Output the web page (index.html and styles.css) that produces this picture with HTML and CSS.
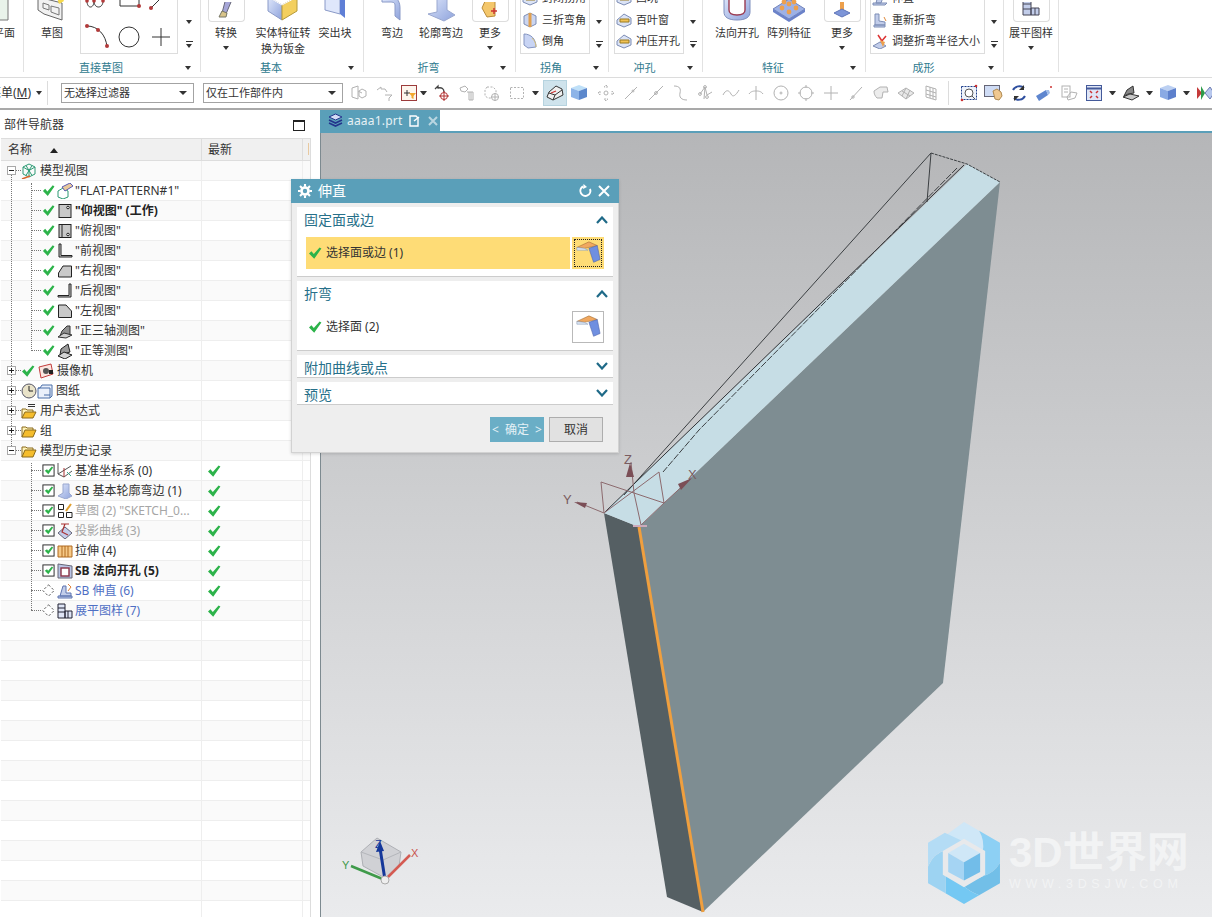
FILE: index.html
```html
<!DOCTYPE html>
<html lang="zh">
<head>
<meta charset="utf-8">
<title>伸直</title>
<link rel="stylesheet" href="styles.css">
</head>
<body>
<svg class="defs" width="0" height="0">
<defs>
<linearGradient id="gb" x1="0" y1="0" x2="1" y2="1"><stop offset="0" stop-color="#dfe7fb"/><stop offset="1" stop-color="#8ea3dc"/></linearGradient>
<symbol id="check" viewBox="0 0 14 14"><path d="M1 7.500 3.400 5.200 5.800 8 11.600 1.400 13.400 2.600 6.200 12.800Z" fill="#2cb34a"/></symbol>
<symbol id="folder" viewBox="0 0 16 16"><path d="M1 14V4h4l1 1h6v2" fill="#fff3b8" stroke="#8a6a1c"/><path d="M1 14 4 7h11l-3 7Z" fill="#f5bd2c" stroke="#8a6a1c"/></symbol>
<symbol id="folderdoc" viewBox="0 0 16 16"><path d="M7 1.500h7M7 3.500h7" stroke="#333"/><path d="M1 15V6h4l1 1h6v2" fill="#fff3b8" stroke="#8a6a1c"/><path d="M1 15 4 9h11l-3 6Z" fill="#f5bd2c" stroke="#8a6a1c"/></symbol>
<symbol id="tri" viewBox="0 0 16 16"><path d="M3 13 5 8 10 3 13 3 13 9 13 13Z" fill="#8f8f8f" stroke="#333"/><path d="M1 14 7 10 15 12 9 15Z" fill="#cfcfcf" stroke="#333"/></symbol>
<symbol id="diamond" viewBox="0 0 16 16"><path d="M8 1 15 8 8 15 1 8Z" fill="#fff" stroke="#333" stroke-dasharray="3 2.400"/></symbol>
<symbol id="box" viewBox="0 0 14 14"><rect x="1" y="1" width="12" height="12" fill="#fff" stroke="#222"/><path d="M3 7.300 5.400 5.600 6.600 7.400 10.600 2.600 12 3.800 6.800 11Z" fill="#2cb34a"/></symbol>
<symbol id="bendsel" viewBox="0 0 28 28"><path d="M2 8 15 2 24 6 10 9Z" fill="#f0a860" stroke="#a06a30" stroke-width=".6"/><path d="M2 8 10 9 14 11 2 11Z" fill="#dbe6f5" stroke="#8a9ab5" stroke-width=".6"/><path d="M15 9 24 6 27 21 20 24Z" fill="#6f8fe0" stroke="#4a60a8" stroke-width=".6"/></symbol>
<symbol id="gal1" viewBox="0 0 18 16"><path d="M2 8 9 2 16 6 16 12 9 15 2 12Z" fill="#dbe3f5" stroke="#7d8db5"/><path d="M5 7h9v3H5Z" fill="#f2c356" stroke="#9a7a20"/></symbol>
</defs>
</svg>

<div class="app">
  <header class="ribbon">
    <section class="grp g1">
      <div class="body"><div class="big shifted"><svg class="bi" width="22" height="22" viewBox="0 0 22 22"><path d="M0-4H15V20H0Z" fill="#e9f3ea" stroke="#777"/></svg><span class="t">平面</span></div></div>
      <div class="foot"></div>
    </section>
    <section class="grp g2">
      <div class="body">
        <div class="big w48"><svg class="bi" width="30" height="22" viewBox="0 0 30 22"><path d="M1-3 25 3 25 20 7 14 1 10Z" fill="#f1f1f1" stroke="#666"/><path d="M6 3 12 5 12 10 6 8ZM14 6 22 8 22 15 14 12Z" fill="none" stroke="#777"/><path d="M24-5 27 1 22 4 20-2Z" fill="#f6d94b"/></svg><span class="t">草图</span></div>
        <div class="gallery sk">
          <svg width="32" height="32" viewBox="0 0 32 32"><path d="M6 5V12C6 20 13 20 13 12V5M13 12C13 20 22 20 22 12V5" fill="none" stroke="#333"/><circle cx="6" cy="12" r="1.800" fill="#b23a3a"/><circle cx="13" cy="12" r="1.800" fill="#b23a3a"/><circle cx="22" cy="12" r="1.800" fill="#b23a3a"/></svg>
          <svg width="32" height="32" viewBox="0 0 32 32"><path d="M7 0V17H26V0" fill="none" stroke="#333"/><circle cx="26" cy="17" r="2" fill="#b23a3a"/></svg>
          <svg width="32" height="32" viewBox="0 0 32 32"><path d="M6 19 24 1" fill="none" stroke="#333"/><circle cx="6" cy="19" r="2" fill="#b23a3a"/></svg>
          <svg width="32" height="32" viewBox="0 0 32 32"><path d="M6 5C17 5 25 14 26 26" fill="none" stroke="#333"/><circle cx="6" cy="5" r="2" fill="#b23a3a"/><circle cx="17" cy="9" r="2" fill="#b23a3a"/><circle cx="26" cy="25" r="2" fill="#b23a3a"/></svg>
          <svg width="32" height="32" viewBox="0 0 32 32"><circle cx="16" cy="16" r="10" fill="none" stroke="#333"/></svg>
          <svg width="32" height="32" viewBox="0 0 32 32"><path d="M16 7V25M7 16H25" stroke="#333"/></svg>
        </div>
        <div class="side"><i class="caret"></i><i class="caret2"></i></div>
      </div>
      <div class="foot"><span class="lab">直接草图</span><i class="caret"></i></div>
    </section>
    <section class="grp g3">
      <div class="body">
        <div class="big w50"><span class="more-box"><svg width="18" height="16" viewBox="0 0 18 16"><path d="M9-4 14 0 9 12 5 11Z" fill="#a6a6d8" stroke="#667"/><path d="M2 15 5 9 10 11 9 15Z" fill="#d8c48a" stroke="#776"/></svg></span><span class="t">转换</span><i class="caret"></i></div>
        <div class="big w64"><svg class="bi" width="32" height="22" viewBox="0 0 32 22"><path d="M1-3 1 11 15 20 15 5Z" fill="url(#gb)" stroke="#8a9ac8"/><path d="M15 5 30-3 30 11 15 20Z" fill="#f3cf5e" stroke="#b59a3a"/><path d="M1-3 15 5 30-3" fill="none" stroke="#fff"/></svg><span class="t two">实体特征转<br>换为钣金</span></div>
        <div class="big w40"><svg class="bi" width="26" height="22" viewBox="0 0 26 22"><path d="M3-3 18-3 18 14 3 10Z" fill="#dfe7fb" stroke="#8a9ac8"/><path d="M18-3 23-3 23 18 18 14Z" fill="#5f7fd6"/></svg><span class="t">突出块</span></div>
      </div>
      <div class="foot"><span class="lab">基本</span><i class="caret"></i></div>
    </section>
    <section class="grp g4">
      <div class="body">
        <div class="big w50"><svg class="bi" width="24" height="22" viewBox="0 0 24 22"><path d="M2-3H12C18-3 20 3 20 8V20L15 16V5C15 2 12 2 9 2L2 2Z" fill="url(#gb)" stroke="#8a9ac8"/></svg><span class="t">弯边</span></div>
        <div class="big w48"><svg class="bi" width="30" height="22" viewBox="0 0 30 22"><path d="M11-4H21V10L29 15 18 21 2 14 11 12Z" fill="url(#gb)" stroke="#9aa8d0"/></svg><span class="t">轮廓弯边</span></div>
        <div class="big w50"><span class="more-box"><svg width="18" height="16" viewBox="0 0 18 16"><path d="M1 6 5-3 14-3 14 14 6 15Z" fill="#f4c76b" stroke="#b98b3a"/><path d="M10 9h6M13 6v6" stroke="#c33" stroke-width="1.400"/></svg></span><span class="t">更多</span><i class="caret"></i></div>
      </div>
      <div class="foot"><span class="lab">折弯</span><i class="caret"></i></div>
    </section>
    <section class="grp g5">
      <div class="body">
        <div class="gallery list wl">
          <div class="gi"><svg width="18" height="16"><use href="#gal1"/></svg>封闭拐角</div>
          <div class="gi"><svg width="18" height="16" viewBox="0 0 16 16"><path d="M2 4 8 1 14 4 14 12 8 15 2 12Z" fill="#cbd5f0" stroke="#7d8db5"/><path d="M8 1V15" stroke="#e0a050" stroke-width="3"/></svg>三折弯角</div>
          <div class="gi"><svg width="18" height="16" viewBox="0 0 16 16"><path d="M2 1C9 1 14 6 14 14L6 15 2 12Z" fill="#c8d4f4" stroke="#8494c0"/><path d="M10 5C13 8 14 11 14 14" stroke="#d8c07a" fill="none"/></svg>倒角</div>
        </div>
        <div class="side s18"><i class="caret"></i><i class="caret2"></i></div>
      </div>
      <div class="foot"><span class="lab">拐角</span><i class="caret"></i></div>
    </section>
    <section class="grp g6">
      <div class="body">
        <div class="gallery list wl">
          <div class="gi"><svg width="18" height="16"><use href="#gal1"/></svg>凹坑</div>
          <div class="gi"><svg width="18" height="16"><use href="#gal1"/></svg>百叶窗</div>
          <div class="gi"><svg width="18" height="16"><use href="#gal1"/></svg>冲压开孔</div>
        </div>
        <div class="side s18"><i class="caret"></i><i class="caret2"></i></div>
      </div>
      <div class="foot"><span class="lab">冲孔</span><i class="caret"></i></div>
    </section>
    <section class="grp g7">
      <div class="body">
        <div class="big w52 ml8"><svg class="bi" width="30" height="22" viewBox="0 0 30 22"><path d="M2-4V12C2 17 6 20 15 20S28 17 28 12V-4Z" fill="url(#gb)" stroke="#7f8fbe"/><path d="M7-4V10C7 13 10 15 15 15S23 13 23 10V-4Z" fill="#fff" stroke="#9a3b52" stroke-width="1.400"/></svg><span class="t">法向开孔</span></div>
        <div class="big w52"><svg class="bi" width="34" height="22" viewBox="0 0 34 22"><path d="M1 9 17-1 33 9 17 19Z" fill="#9db1e6" stroke="#7284bb"/><path d="M1 9V12L17 22 33 12V9L17 19Z" fill="#6b82c9"/><g fill="#eda04c"><circle cx="10" cy="8" r="2.400"/><circle cx="17" cy="4" r="2.400"/><circle cx="24" cy="8" r="2.400"/><circle cx="17" cy="12" r="2.400"/><circle cx="12" cy="2" r="2.400"/><circle cx="22" cy="2" r="2.400"/></g></svg><span class="t">阵列特征</span></div>
        <div class="big w46 ml4"><span class="more-box"><svg width="18" height="16" viewBox="0 0 18 16"><path d="M7-3h4V8H7Z" fill="#eda04c"/><path d="M1 11 9 7 17 11 9 15Z" fill="#7d95d8" stroke="#5f75b8"/></svg></span><span class="t">更多</span><i class="caret"></i></div>
      </div>
      <div class="foot"><span class="lab">特征</span><i class="caret"></i></div>
    </section>
    <section class="grp g8">
      <div class="body">
        <div class="gallery list wx">
          <div class="gi"><svg width="18" height="16" viewBox="0 0 16 16"><path d="M1 13H15L13 15H1ZM7 2h6L9 13H4Z" fill="#c2cdea" stroke="#7d8db5"/></svg>伸直</div>
          <div class="gi"><svg width="18" height="16" viewBox="0 0 16 16"><path d="M2 13H13V15H2ZM3 13V2H7V9L13 10V13Z" fill="#c2cdea" stroke="#7d8db5"/><path d="M12 5 14 9" stroke="#e08a3a"/></svg>重新折弯</div>
          <div class="gi"><svg width="18" height="16" viewBox="0 0 16 16"><path d="M1 13 8 9 14 13 8 16Z" fill="#c2cdea" stroke="#7d8db5"/><path d="M6 2 10 8M9 9 14 3" stroke="#d33" stroke-width="1.500"/><path d="M8 7 13 9 11 14Z" fill="#eda04c"/></svg>调整折弯半径大小</div>
        </div>
        <div class="side s18"><i class="caret"></i><i class="caret2"></i></div>
      </div>
      <div class="foot"><span class="lab">成形</span><i class="caret"></i></div>
    </section>
    <section class="grp g9">
      <div class="body">
        <div class="big w54"><span class="more-box"><svg width="18" height="16" viewBox="0 0 18 16"><path d="M1-3H9V13H1ZM9 6H17V13H9Z" fill="#c2cdea" stroke="#445"/><path d="M1 2H9M1 7H9M13 6V13" stroke="#445"/></svg></span><span class="t">展平图样</span><i class="caret"></i></div>
      </div>
      <div class="foot"></div>
    </section>
  </header>

  <nav class="toolbar">
    <span class="menu">菜单(<u>M</u>)</span><i class="caret menu-c"></i><span class="sep first"></span>
    <div class="select s1"><span>无选择过滤器</span><i class="caret"></i></div>
    <div class="select s2"><span>仅在工作部件内</span><i class="caret"></i></div>
    <span class="ti ti-first"><svg width="18" height="18" viewBox="0 0 18 18" class="dim"><path d="M2 4 8 2 8 15 2 13ZM8 7 12 9M12 5l4 2v5l-4 2-3-2V7Z"/></svg></span>
    <span class="ti"><svg width="18" height="18" viewBox="0 0 18 18" class="dim"><path d="M2 6 6 3V5H10L12 8M10 11H17L14 14V17"/></svg></span>
    <span class="ti"><svg width="16" height="16" viewBox="0 0 16 16"><rect x=".5" y=".5" width="15" height="15" fill="#fdf6ee" stroke="#9c3b3b"/><path d="M3 8H9M6 5V11" stroke="#333"/><path d="M8 8H15L12.500 11V14L10.500 13V11Z" fill="#f2a72e"/></svg></span>
    <i class="caret ar tight"></i>
    <span class="ti"><svg width="18" height="18" viewBox="0 0 18 18"><path d="M2 5 5 2V4C9 3 11 5 11 8" fill="none" stroke="#444" stroke-width="1.300"/><circle cx="11" cy="12" r="3.500" fill="none" stroke="#b23030"/><path d="M11 7V17M6 12H16" stroke="#b23030"/></svg></span>
    <span class="ti"><svg width="18" height="18" viewBox="0 0 18 18" class="dim"><path d="M2 4 7 2 10 5 7 8 3 7ZM9 8H15V16H11V8M13 8V16"/></svg></span>
    <span class="ti"><svg width="18" height="18" viewBox="0 0 18 18" class="dim"><path d="M4 3H10L13 6V10M4 3 2 6V12L5 14H8" stroke-dasharray="2 1.500"/><circle cx="12" cy="13" r="3.500"/><path d="M12 9V17M8 13H16"/></svg></span>
    <span class="ti"><svg width="18" height="18" viewBox="0 0 18 18" class="dim"><rect x="2.500" y="3.500" width="13" height="11" stroke-dasharray="2 1.500"/></svg></span>
    <i class="caret ar"></i>
    <span class="ti sel"><svg width="18" height="16" viewBox="0 0 18 16"><path d="M1 12 3 7 10 1 16 4 17 10 7 15Z" fill="#f0f0f0" stroke="#333"/><path d="M3 8 9 10 16 5M9 10 7 15" fill="none" stroke="#333"/><path d="M5 8 10 6" stroke="#c33" stroke-width="1.300"/></svg></span>
    <span class="ti"><svg width="18" height="17" viewBox="0 0 18 17"><path d="M1 4 9 1 17 4 9 7Z" fill="#bfe0f8"/><path d="M1 4 9 7V16L1 13Z" fill="#8db4e8"/><path d="M17 4 9 7V16L17 13Z" fill="#5d88cc"/></svg></span>
    <span class="ti nudge"><svg width="18" height="18" viewBox="0 0 18 18" class="dim"><circle cx="9" cy="9" r="2"/><path d="M9 1 11 3H7ZM9 17 7 15H11ZM1 9 3 7V11ZM17 9 15 11V7Z" stroke-dasharray="2 1"/></svg></span>
    <span class="ti"><svg width="18" height="18" viewBox="0 0 18 18" class="dim"><path d="M3 15 15 3"/><circle cx="11" cy="7" r="1"/></svg></span>
    <span class="ti"><svg width="18" height="18" viewBox="0 0 18 18" class="dim"><path d="M2 16 16 2"/><circle cx="9" cy="9" r="1.400"/></svg></span>
    <span class="ti"><svg width="18" height="18" viewBox="0 0 18 18" class="dim"><path d="M2 2C8 2 9 5 8 9S9 16 15 16"/></svg></span>
    <span class="ti"><svg width="18" height="18" viewBox="0 0 18 18" class="dim"><path d="M3 10 8 3 10 11 15 8M8 3 7 15"/><circle cx="8" cy="3" r="1.400"/><circle cx="3" cy="10" r="1.400"/><circle cx="10" cy="13" r="1.400"/></svg></span>
    <span class="ti"><svg width="18" height="18" viewBox="0 0 18 18" class="dim"><path d="M1 11C4 5 7 6 9 10S14 11 17 6"/></svg></span>
    <span class="ti"><svg width="18" height="18" viewBox="0 0 18 18" class="dim"><path d="M9 2V16M2 10C4 7 7 7 9 7S14 7 16 10"/></svg></span>
    <span class="ti"><svg width="18" height="18" viewBox="0 0 18 18" class="dim"><circle cx="9" cy="9" r="7"/><circle cx="9" cy="9" r="1"/></svg></span>
    <span class="ti"><svg width="18" height="18" viewBox="0 0 18 18" class="dim"><circle cx="9" cy="9" r="6"/><path d="M9 1V4M9 14V17M1 9H4M14 9H17"/></svg></span>
    <span class="ti"><svg width="18" height="18" viewBox="0 0 18 18" class="dim"><path d="M9 2V16M2 9H16"/></svg></span>
    <span class="ti"><svg width="18" height="18" viewBox="0 0 18 18" class="dim"><path d="M3 16 15 3"/><circle cx="6" cy="13" r="1.200"/></svg></span>
    <span class="ti"><svg width="18" height="18" viewBox="0 0 18 18" class="dim"><path d="M2 7 8 3 15 3 16 8 11 8 10 14 5 14C3 12 2 10 2 7Z" fill="#ececec"/></svg></span>
    <span class="ti"><svg width="18" height="18" viewBox="0 0 18 18" class="dim"><path d="M1 9 9 4 17 9 9 15Z" fill="#e8e8e8"/><path d="M5 7 13 12M9 4 5 12M13 6 9 15"/></svg></span>
    <span class="ti"><svg width="18" height="18" viewBox="0 0 18 18" class="dim"><path d="M4 2 14 5V16L4 13ZM4 6 14 9M4 10 14 13M8 3V14M11 4V15"/></svg></span>
    <span class="sep"></span>
    <span class="ti"><svg width="18" height="18" viewBox="0 0 18 18"><rect x="1.500" y="2.500" width="15" height="13" fill="#eef3fb" stroke="#1f3f8a" stroke-dasharray="2 1"/><circle cx="9" cy="9" r="4" fill="#fff" stroke="#555"/><path d="M12 12 15 15" stroke="#555"/><circle cx="16" cy="2" r="1.300" fill="#c33"/><circle cx="2" cy="16" r="1.300" fill="#c33"/></svg></span>
    <span class="ti"><svg width="20" height="18" viewBox="0 0 20 18"><rect x=".5" y="1.500" width="15" height="11" fill="#cfdcf5" stroke="#667"/><path d="M9 7 13 5 17 8 18 12 15 16 11 15Z" fill="#f0c890" stroke="#b08a50"/></svg></span>
    <span class="ti"><svg width="18" height="18" viewBox="0 0 18 18"><path d="M3 6C5 2 11 1 14 4M15 12C13 16 7 17 4 14" fill="none" stroke="#2f4f9f" stroke-width="2"/><path d="M14 1V6H9" fill="#333"/><path d="M4 17V12H9" fill="#333"/></svg></span>
    <span class="ti"><svg width="18" height="18" viewBox="0 0 18 18"><path d="M1 12 11 6 13 11 4 17Z" fill="#5e86cf"/><path d="M11 6 13 11 15 9 14 6Z" fill="#9fbce8"/><circle cx="16" cy="3" r="1" fill="#c33"/></svg></span>
    <span class="ti"><svg width="18" height="18" viewBox="0 0 18 18" class="dim"><rect x="2" y="2" width="8" height="11"/><path d="M4 5H8M4 8H8M7 13 11 8 17 9 15 14 8 16Z"/></svg></span>
    <span class="ti"><svg width="16" height="16" viewBox="0 0 16 16"><rect x=".5" y=".5" width="15" height="15" fill="#dfe6f6" stroke="#445a9a"/><path d="M1 3.500H15" stroke="#445a9a" stroke-width="2"/><path d="M4 6 6 8M12 6 10 8M4 13 6 11M12 13 10 11" stroke="#c33" stroke-width="1.500"/></svg></span>
    <i class="caret ar"></i>
    <span class="ti"><svg width="18" height="16" viewBox="0 0 18 16"><path d="M2 11 5 5 11 1 12 8 6 9Z" fill="#888" stroke="#333"/><path d="M1 12 8 9 17 11 10 15Z" fill="#c8c8c8" stroke="#333"/></svg></span>
    <i class="caret ar"></i>
    <span class="ti"><svg width="18" height="17" viewBox="0 0 18 17"><path d="M1 4 9 1 17 4 9 7Z" fill="#bcd0f2"/><path d="M1 4 9 7V16L1 13Z" fill="#8aaae4"/><path d="M17 4 9 7V16L17 13Z" fill="#5d80cc"/></svg></span>
    <i class="caret ar"></i>
    <span class="ti"><svg width="18" height="16" viewBox="0 0 18 16"><path d="M1 2 6 8 1 14Z" fill="#c53a3a"/><path d="M5 1 9 8 5 15Z" fill="#2e9b4a"/><path d="M9 8 14 2 18 8 14 14Z" fill="#b8c8ee" stroke="#6a7bb0"/></svg></span>
  </nav>

  <main class="work">
    <aside class="nav">
      <div class="nav-title"><span>部件导航器</span><i class="max"></i></div>
      <div class="table">
        <div class="row head">
          <div class="cell name-h">名称<i class="sort"></i></div>
          <div class="cell latest-h">最新</div>
          <div class="cell tick"></div>
        </div>
        <div class="tree">
          <i class="vl v1"></i><i class="vl v2"></i><i class="vl v3"></i>

          <div class="row"><div class="name l1"><i class="exp"></i><svg class="ic16" viewBox="0 0 16 16"><path d="M8 1 14 4V11L8 14 2 11V4ZM2 4 8 7.500 14 4M8 7.500V14M5 2.500 11 12.500M11 2.500 5 12.500" fill="none" stroke="#2c9a74"/><path d="M1 16 9 13" stroke="#d9642b" stroke-width="1.500"/></svg><span>模型视图</span></div><div class="latest"></div></div>
          <div class="row"><div class="name l2"><svg class="ck"><use href="#check"/></svg><svg class="ic16" viewBox="0 0 16 16"><path d="M1 8 6 5 11 8V14L6 16 1 14Z" fill="none" stroke="#2c9a74"/><path d="M5 4 13 0 16 3 8 8Z" fill="#e8c89a" stroke="#5a5ab0"/></svg><span>"FLAT-PATTERN#1"</span></div><div class="latest"></div></div>
          <div class="row"><div class="name l2"><svg class="ck"><use href="#check"/></svg><svg class="ic16" viewBox="0 0 16 16"><rect x="2" y="1.500" width="12" height="13" fill="#c9c9c9" stroke="#222"/><circle cx="11" cy="4.500" r="1.300" fill="#fff" stroke="#222"/></svg><span class="b">"仰视图" (工作)</span></div><div class="latest"></div></div>
          <div class="row"><div class="name l2"><svg class="ck"><use href="#check"/></svg><svg class="ic16" viewBox="0 0 16 16"><rect x="2" y="1.500" width="12" height="13" fill="#c9c9c9" stroke="#222"/><path d="M5 1.500V14.500" stroke="#222"/><circle cx="11" cy="11.500" r="1.300" fill="#fff" stroke="#222"/></svg><span>"俯视图"</span></div><div class="latest"></div></div>
          <div class="row"><div class="name l2"><svg class="ck"><use href="#check"/></svg><svg class="ic16" viewBox="0 0 16 16"><path d="M2 1V14H15V12.500H4V1Z" fill="#c9c9c9" stroke="#222"/></svg><span>"前视图"</span></div><div class="latest"></div></div>
          <div class="row"><div class="name l2"><svg class="ck"><use href="#check"/></svg><svg class="ic16" viewBox="0 0 16 16"><path d="M1.500 14V10L6 3H14.500V14Z" fill="#c9c9c9" stroke="#222"/></svg><span>"右视图"</span></div><div class="latest"></div></div>
          <div class="row"><div class="name l2"><svg class="ck"><use href="#check"/></svg><svg class="ic16" viewBox="0 0 16 16"><path d="M14 1V14H1V12.500H12V1Z" fill="#c9c9c9" stroke="#222"/></svg><span>"后视图"</span></div><div class="latest"></div></div>
          <div class="row"><div class="name l2"><svg class="ck"><use href="#check"/></svg><svg class="ic16" viewBox="0 0 16 16"><path d="M1.500 2H9L14.500 8V14.500H1.500Z" fill="#c9c9c9" stroke="#222"/></svg><span>"左视图"</span></div><div class="latest"></div></div>
          <div class="row"><div class="name l2"><svg class="ck"><use href="#check"/></svg><svg class="ic16"><use href="#tri"/></svg><span>"正三轴测图"</span></div><div class="latest"></div></div>
          <div class="row"><div class="name l2"><svg class="ck"><use href="#check"/></svg><svg class="ic16" viewBox="0 0 16 16"><path d="M3 12 4 6 11 1 13 9Z" fill="#9a9a9a" stroke="#222"/><path d="M1 13 7 9 15 12 8 16Z" fill="#d4d4d4" stroke="#222"/></svg><span>"正等测图"</span></div><div class="latest"></div></div>

          <div class="row"><div class="name l1"><i class="exp plus"></i><svg class="ck"><use href="#check"/></svg><svg class="ic16" viewBox="0 0 16 16"><path d="M1 4 13 1 15 11 3 15Z" fill="#fbe6e0" stroke="#c23b3b"/><circle cx="8" cy="8" r="3" fill="#555"/><path d="M11 7h4v4h-4z" fill="#222"/></svg><span>摄像机</span></div><div class="latest"></div></div>
          <div class="row"><div class="name l1"><i class="exp plus"></i><svg class="ic32" viewBox="0 0 32 16"><circle cx="8" cy="8" r="7" fill="#e9e3c9" stroke="#556"/><path d="M8 3V8H12" fill="none" stroke="#222"/><path d="M19 5 21 2H31V13L29 15H17V5Z" fill="#eaf0fb" stroke="#4a6fa8"/><path d="M17 5H29V15M23 12H29" fill="none" stroke="#4a6fa8"/></svg><span>图纸</span></div><div class="latest"></div></div>
          <div class="row"><div class="name l1"><i class="exp plus"></i><svg class="ic16"><use href="#folderdoc"/></svg><span>用户表达式</span></div><div class="latest"></div></div>
          <div class="row"><div class="name l1"><i class="exp plus"></i><svg class="ic16"><use href="#folder"/></svg><span>组</span></div><div class="latest"></div></div>
          <div class="row"><div class="name l1"><i class="exp"></i><svg class="ic16"><use href="#folder"/></svg><span>模型历史记录</span></div><div class="latest"></div></div>

          <div class="row"><div class="name l2"><svg class="ck"><use href="#box"/></svg><svg class="ic16" viewBox="0 0 16 16"><path d="M1 0V11L7 14 15 8M1 11 14 3" fill="none" stroke="#555"/><path d="M7 5V14" stroke="#a33"/><path d="M10 9 14 13" stroke="#3a8"/></svg><span>基准坐标系 (0)</span></div><div class="latest"><svg class="ck"><use href="#check"/></svg></div></div>
          <div class="row"><div class="name l2"><svg class="ck"><use href="#box"/></svg><svg class="ic16" viewBox="0 0 16 16"><path d="M6 1H12V10L15 13 9 16 1 13 6 10Z" fill="url(#gb)" stroke="#9aa8d0"/></svg><span>SB 基本轮廓弯边 (1)</span></div><div class="latest"><svg class="ck"><use href="#check"/></svg></div></div>
          <div class="row"><div class="name l2"><svg class="ck"><use href="#box"/></svg><svg class="ic16" viewBox="0 0 16 16"><path d="M1.500 1.500H6.500V6.500H1.500ZM1.500 9.500H6.500V14.500H1.500ZM9.500 14.500H15V9.500H9.500Z" fill="#fff" stroke="#222"/><path d="M9 8 14 1" stroke="#e0a030" stroke-width="2"/></svg><span class="g">草图 (2) "SKETCH_0...</span></div><div class="latest"><svg class="ck"><use href="#check"/></svg></div></div>
          <div class="row"><div class="name l2"><svg class="ck"><use href="#box"/></svg><svg class="ic16" viewBox="0 0 16 16"><path d="M1 10 8 4 15 10 8 16Z" fill="#c3ccea" stroke="#667"/><path d="M4 1H12M8 1 5 9 11 12" fill="none" stroke="#a33" stroke-width="1.200"/></svg><span class="g">投影曲线 (3)</span></div><div class="latest"><svg class="ck"><use href="#check"/></svg></div></div>
          <div class="row"><div class="name l2"><svg class="ck"><use href="#box"/></svg><svg class="ic16" viewBox="0 0 16 16"><path d="M1 3H15V14H1Z" fill="#f6c987" stroke="#b06a20"/><path d="M5 3V14M8 3V14M11 3V14" stroke="#b06a20"/></svg><span>拉伸 (4)</span></div><div class="latest"><svg class="ck"><use href="#check"/></svg></div></div>
          <div class="row"><div class="name l2"><svg class="ck"><use href="#box"/></svg><svg class="ic16" viewBox="0 0 16 16"><path d="M1 1 15 3V15H1Z" fill="#b9c4e4" stroke="#667"/><rect x="4" y="5" width="8" height="8" fill="#fff" stroke="#8a3347" stroke-width="1.400"/></svg><span class="b">SB 法向开孔 (5)</span></div><div class="latest"><svg class="ck"><use href="#check"/></svg></div></div>
          <div class="row"><div class="name l2"><svg class="ck"><use href="#diamond"/></svg><svg class="ic16" viewBox="0 0 16 16"><path d="M1 13H15V15H1ZM6 3H9V10H14V13H3Z" fill="#c2cdea" stroke="#5f74b0"/><path d="M11 1 14 4 11 8" fill="none" stroke="#e0803a"/></svg><span class="bl">SB 伸直 (6)</span></div><div class="latest"><svg class="ck"><use href="#check"/></svg></div></div>
          <div class="row"><div class="name l2"><svg class="ck"><use href="#diamond"/></svg><svg class="ic16" viewBox="0 0 16 16"><path d="M1 1H8V15H1ZM8 8H15V15H8Z" fill="#dfe5f6" stroke="#223"/><path d="M1 5H8M1 9H8M11 8V15" stroke="#223"/></svg><span class="bl">展平图样 (7)</span></div><div class="latest"><svg class="ck"><use href="#check"/></svg></div></div>

          <div class="filler"></div>
        </div>
      </div>
    </aside>

    <div class="view">
      <div class="tabs">
        <div class="tab">
          <svg width="15" height="16" viewBox="0 0 15 16"><path d="M7.500 1 14 4 7.500 7 1 4Z" fill="#d5dcf5" stroke="#23348c"/><path d="M1 7 7.500 10 14 7M1 10 7.500 13 14 10" fill="none" stroke="#23348c" stroke-width="1.600"/></svg>
          <span>aaaa1.prt</span>
          <svg class="doc" width="12" height="12" viewBox="0 0 12 12"><path d="M2 1H8L10 3V11H2Z" fill="none" stroke="#fff" stroke-width="1.400"/><path d="M6 6 11 2" stroke="#fff" stroke-width="1.400"/></svg>
          <svg class="x" width="10" height="10" viewBox="0 0 10 10"><path d="M1 1 9 9M9 1 1 9" stroke="#b9d6e1" stroke-width="2"/></svg>
        </div>
      </div>
      <div class="canvas">
        <svg class="model" width="891" height="784" viewBox="321 133 891 784">
          <path d="M605 513 640 527 704 912 668 897Z" fill="#555f63"/>
          <path d="M640 527 1001 182 944 683 704 912Z" fill="#7e8d92"/>
          <path d="M605 513 968 164 1001 182 640 527Z" fill="#c6dde5"/>
          <path d="M640 527 704 912" stroke="#ef9f3f" stroke-width="3"/>
          <g fill="none" stroke="#3b3f42" stroke-width="1">
            <path d="M932 153 968 164 1001 182" stroke-dasharray="3 1"/>
            <path d="M932 153 625 495"/>
            <path d="M932 153 928 202"/>
            <path d="M965 165 606 512" stroke="#30353a"/>
            <path d="M958 168 700 430 664 472" stroke-dasharray="7 1.500"/>
          </g>
          <g fill="none" stroke="#8c6a6e" stroke-width="1">
            <path d="M602 482 605 513M602 482 665 503M660 472 665 503M660 472 605 513M635 493 642 525M635 493 632 462M605 513 578 502M665 503 642 525M665 503 690 480"/>
            <path d="M634 526H648" stroke="#cab" stroke-width="2"/>
          </g>
          <path d="M631 463 627 477 635 477Z" fill="#7b4e56"/>
          <path d="M575 502 588 503 586 508Z" fill="#7b4e56"/>
          <path d="M693 478 679 484 682 490Z" fill="#7b4e56"/>
          <g class="lbl lbl-a"><text x="625" y="464">Z</text><text x="564" y="504">Y</text><text x="689" y="479">X</text></g>

          <path d="M378 838 402 852 400 866 386 878 364 866 362 852Z" fill="#d0d1d5" stroke="#aeb0b5"/>
          <path d="M362 852 384 860 402 852M384 860 386 878" fill="none" stroke="#b4b6bb"/>
          <path d="M386 880 411 855" stroke="#d45a52" stroke-width="2.500"/>
          <path d="M386 880 352 866" stroke="#3f9a4a" stroke-width="2.500"/>
          <path d="M386 880 381 848" stroke="#14379a" stroke-width="3"/>
          <path d="M381 841 377 852 385 851Z" fill="#14379a"/>
          <circle cx="386" cy="880" r="4" fill="#eee" stroke="#aaa"/>
          <g class="lbl lbl-b">
            <text class="lz" x="376" y="848">Z</text><text class="lx" x="412" y="857">X</text><text class="ly" x="343" y="869">Y</text>
          </g>
        </svg>
        <div class="logo">
          <svg width="72" height="82" viewBox="58 38 214 244">
            <path d="M165 38 210 64Q228 95 220 128L165 97 108 80Z" fill="#cfe7f7"/>
            <path d="M210 64 272 100V160Q255 190 220 200V128Q228 95 210 64Z" fill="#8dd0f4"/>
            <path d="M272 160V220L210 256Q180 245 160 225L220 200Q255 190 272 160Z" fill="#72bfe8"/>
            <path d="M210 256 165 282 110 250V195L160 225Q180 245 210 256Z" fill="#74c8f3"/>
            <path d="M110 250 58 220V170Q75 130 110 122V195Z" fill="#9dd3f2"/>
            <path d="M58 170V100L108 70 165 97 110 122Q75 130 58 170Z" fill="#b4dcf5"/>
            <path d="M165 88 228 124V195L165 232 102 195V124Z" fill="#e8e9eb"/>
            <path d="M165 103 213 130 165 158 118 130Z" fill="#cfe7f7"/>
            <path d="M118 130 165 158V212L118 187Z" fill="#a5d4f3"/>
            <path d="M213 130 165 158V212L213 187Z" fill="#72bde9"/>
          </svg>
          <div class="logo-text">
            <strong>3D世界网</strong>
            <span>WWW.3DSJW.COM</span>
          </div>
        </div>
      </div>
    </div>
  </main>

  <div class="dialog">
    <div class="dlg-head">
      <svg width="14" height="14" viewBox="0 0 16 16"><circle cx="8" cy="8" r="4" fill="none" stroke="#fff" stroke-width="3"/><path d="M8 0V3M8 13V16M0 8H3M13 8H16M2.300 2.300 4.500 4.500M11.500 11.500 13.700 13.700M2.300 13.700 4.500 11.500M11.500 4.500 13.700 2.300" stroke="#fff" stroke-width="2.400"/></svg>
      <span class="dlg-title">伸直</span>
      <svg class="rst" width="14" height="14" viewBox="0 0 14 14"><path d="M5 2.500A5 5 0 1 0 12 5" fill="none" stroke="#fff" stroke-width="2"/><path d="M5.500 0 9 3 5 5Z" fill="#fff"/></svg>
      <svg width="12" height="12" viewBox="0 0 12 12"><path d="M1 1 11 11M11 1 1 11" stroke="#fff" stroke-width="2"/></svg>
    </div>
    <div class="dlg-body">
      <section class="sec">
        <div class="sec-head"><span>固定面或边</span><svg class="chev" width="12" height="8" viewBox="0 0 12 8"><path d="M1 7 6 1.500 11 7" fill="none" stroke="#1f6a88" stroke-width="2.200"/></svg></div>
        <div class="pick">
          <div class="pick-main on"><svg class="ck"><use href="#check"/></svg><span>选择面或边 (1)</span></div>
          <div class="pick-btn on"><span class="focus"><svg width="26" height="26"><use href="#bendsel"/></svg></span></div>
        </div>
      </section>
      <section class="sec">
        <div class="sec-head"><span>折弯</span><svg class="chev" width="12" height="8" viewBox="0 0 12 8"><path d="M1 7 6 1.500 11 7" fill="none" stroke="#1f6a88" stroke-width="2.200"/></svg></div>
        <div class="pick">
          <div class="pick-main"><svg class="ck"><use href="#check"/></svg><span>选择面 (2)</span></div>
          <div class="pick-btn"><svg width="26" height="26"><use href="#bendsel"/></svg></div>
        </div>
      </section>
      <section class="sec closed">
        <div class="sec-head"><span>附加曲线或点</span><svg class="chev" width="12" height="8" viewBox="0 0 12 8"><path d="M1 1 6 6.500 11 1" fill="none" stroke="#1f6a88" stroke-width="2.200"/></svg></div>
      </section>
      <section class="sec closed">
        <div class="sec-head"><span>预览</span><svg class="chev" width="12" height="8" viewBox="0 0 12 8"><path d="M1 1 6 6.500 11 1" fill="none" stroke="#1f6a88" stroke-width="2.200"/></svg></div>
      </section>
      <div class="dlg-foot">
        <button class="btn ok">&lt; 确定 &gt;</button>
        <button class="btn">取消</button>
      </div>
    </div>
  </div>
</div>
</body>
</html>
```

FILE: styles.css
```css
* { box-sizing: border-box; }
html, body { margin: 0; padding: 0; height: 100%; overflow: hidden; background: #fff; }
body { font: 12px/16px "Noto Sans", "Noto Sans CJK SC", sans-serif; color: #333; }
.defs { position: absolute; }
svg { display: block; flex: none; }
i { display: block; flex: none; }

.app { position: relative; width: 1212px; height: 917px; display: flex; flex-direction: column; overflow: hidden; }

/* ribbon */
.ribbon { height: 78px; flex: none; display: flex; border-bottom: 1px solid #dcdcdc; font-size: 11px; overflow: hidden; background: #fff; }
.grp { display: flex; flex-direction: column; flex: none; height: 72px; border-right: 1px solid #e2e2e2; }
.g1 { width: 24px; overflow: hidden; }
.g2 { width: 177px; }
.g3 { width: 163px; }
.g4 { width: 152px; }
.g5 { width: 93px; }
.g6 { width: 94px; }
.g7 { width: 163px; }
.g8 { width: 138px; }
.g9 { width: 55px; }
.body { height: 59px; flex: none; display: flex; align-items: flex-start; }
.g2 .body { padding-left: 4px; }
.g4 .body { padding-left: 3px; }
.g5 .body { padding-left: 4px; }
.g6 .body { padding-left: 5px; }
.g8 .body { padding-left: 4px; }
.foot { display: flex; align-items: center; height: 18px; }
.lab { flex: 1; text-align: center; color: #2e7a8e; line-height: 18px; }
.foot .caret { width: 22px; height: 4px; border: 0; position: relative; }
.foot .caret::after { content: ""; position: absolute; left: 7px; top: 0; border: 3.500px solid transparent; border-top: 4px solid #333; border-bottom: 0; }

.big { display: flex; flex-direction: column; align-items: center; flex: none; white-space: nowrap; }
.bi { height: 22px; }
.big .t { margin-top: 3px; line-height: 16px; text-align: center; }
.big .caret { margin-top: 5px; }
.shifted { margin-left: -7px; width: 30px; align-items: flex-start; }
.w40 { width: 40px; } .w46 { width: 46px; } .w48 { width: 48px; } .w50 { width: 50px; }
.w52 { width: 52px; } .w54 { width: 54px; } .w64 { width: 64px; }
.ml4 { margin-left: 4px; } .ml8 { margin-left: 8px; }
.more-box { width: 37px; height: 22px; border: 1px solid #ddd; border-top: 0; border-radius: 0 0 4px 4px; display: flex; align-items: flex-end; justify-content: center; padding-bottom: 3px; }

.caret { width: 0; height: 0; border: 3.500px solid transparent; border-top: 4px solid #333; border-bottom: 0; }
.caret2 { width: 7px; height: 7px; border-top: 1px solid #333; position: relative; }
.caret2::after { content: ""; position: absolute; left: 0; top: 2px; border: 3.500px solid transparent; border-top: 4px solid #333; border-bottom: 0; }

.gallery { height: 54px; border: 1px solid #ddd; border-top: 0; overflow: hidden; flex: none; }
.sk { width: 98px; margin-left: 4px; display: grid; grid-template-columns: repeat(3, 32px); grid-auto-rows: 32px; align-content: end; }
.list { display: flex; flex-direction: column; justify-content: flex-end; padding-bottom: 1px; }
.wl { width: 70px; }
.wx { width: 115px; }
.gi { display: flex; align-items: center; gap: 3px; height: 21.500px; flex: none; white-space: nowrap; }
.side { width: 22px; height: 54px; flex: none; display: flex; flex-direction: column; align-items: center; gap: 17px; padding-top: 20px; }
.s18 { width: 18px; }

/* command toolbar */
.toolbar { height: 32px; flex: none; display: flex; align-items: center; border-bottom: 2px solid #a9a9a9; font-size: 11px; overflow: hidden; background: #fff; padding-bottom: 1px; }
.menu { margin-left: -11px; font-size: 12px; white-space: nowrap; width: 45px; flex: none; }
.menu-c { margin-left: 2px; }
.sep { width: 1px; height: 24px; background: #dcdcdc; flex: none; margin: 0 7px 0 5px; }
.sep.first { margin: 0 13px 0 5px; }
.select { height: 20px; border: 1px solid #a3a3a3; display: flex; align-items: center; justify-content: space-between; padding: 0 6px 0 2px; flex: none; }
.select .caret { border-width: 4px; border-top-width: 4.500px; border-bottom-width: 0; }
.s1 { width: 133px; margin-right: 9px; }
.s2 { width: 140px; }
.ti { width: 25px; height: 24px; flex: none; display: flex; align-items: center; justify-content: center; }
.ti-first { margin-left: 3px; }
.ar { margin: 0 2.500px; width: 7px; }
.ar.tight { margin-left: -1.500px; }
.sel { width: 22px; margin-left: 3px; background: #cfe3ec; outline: 1px solid #b6d3df; }
.nudge { margin-left: 2px; }
.dim { fill: none; stroke: #b2b2b2; stroke-width: 1; }

/* main */
.work { flex: 1; min-height: 0; display: flex; }
.nav { width: 320px; flex: none; display: flex; flex-direction: column; padding-left: 1px; padding-right: 9px; background: #fff; }
.nav-title { height: 28px; flex: none; display: flex; align-items: center; justify-content: space-between; padding: 2px 6px 0 3px; }
.max { width: 12px; height: 11px; border: 1.500px solid #222; border-top-width: 2px; }
.table { flex: 1; min-height: 0; display: flex; flex-direction: column; border-top: 1px solid #ddd; border-right: 1px solid #ddd; }
.row { display: grid; grid-template-columns: 201px 101px 1fr; height: 20px; flex: none; align-items: stretch; border-bottom: 1px solid #eee; background: #fff; }
.tree .row:nth-child(even) { background: #fafafa; }
.head { height: 22px; background: #f0f0f0; border-bottom: 1px solid #ddd; }
.cell { display: flex; align-items: center; border-right: 1px solid #ddd; padding-top: 1px; }
.name-h { padding-left: 7px; }
.latest-h { padding-left: 6px; }
.tick { border-right: 0; position: relative; }
.tick::after { content: ""; position: absolute; left: 5px; top: 4px; width: 1px; height: 12px; background: #e8c9a0; }
.sort { margin-left: 18px; border: 4.500px solid transparent; border-bottom: 5px solid #222; border-top: 0; }
.tree { flex: 1; min-height: 0; display: flex; flex-direction: column; position: relative; }
.vl { position: absolute; width: 0; border-left: 1px dotted #777; z-index: 1; }
.v1 { left: 10px; top: 14px; height: 271px; }
.v2 { left: 30px; top: 22px; height: 168px; }
.v3 { left: 30px; top: 302px; height: 147px; }
.name { display: flex; align-items: center; gap: 3px; border-right: 1px solid #eee; position: relative; white-space: nowrap; overflow: hidden; }
.l1 { padding-left: 6px; }
.l2 { padding-left: 41px; gap: 2px; }
.l2 .ck { width: 13px; height: 13px; }
.name::before { content: ""; position: absolute; top: 9px; border-top: 1px dotted #777; }
.l1::before { left: 15px; width: 5px; }
.l2::before { left: 30px; width: 10px; }
.latest { border-right: 1px solid #eee; padding-left: 5px; display: flex; align-items: center; }
.ck { width: 14px; height: 14px; }
.ic16 { width: 16px; height: 16px; }
.ic32 { width: 32px; height: 16px; }
.exp { width: 9px; height: 9px; margin-right: 2px; border: 1px solid #a8a8a8; background: #fff linear-gradient(#222, #222) center / 5px 1px no-repeat; position: relative; z-index: 2; }
.exp.plus { background: linear-gradient(#222, #222) center / 5px 1px no-repeat, linear-gradient(#222, #222) center / 1px 5px no-repeat, #fff; }
.b { font-weight: 700; color: #222; }
.g { color: #a6a6a6; }
.bl { color: #4f6fc4; }
.filler { flex: 1; min-height: 0; background:
  linear-gradient(#eee, #eee) 200px 0 / 1px 100% no-repeat,
  linear-gradient(#eee, #eee) 301px 0 / 1px 100% no-repeat,
  repeating-linear-gradient(#fff 0 19px, #eee 19px 20px, #fafafa 20px 39px, #eee 39px 40px); }

/* viewport */
.view { flex: 1; min-width: 0; display: flex; flex-direction: column; }
.tabs { height: 23px; flex: none; display: flex; border-bottom: 2px solid #5a9fb9; background: #fff; }
.tab { width: 120px; height: 21px; background: #5a9fb9; color: #e6f1f5; display: flex; align-items: center; font-size: 12px; letter-spacing: .2px; padding-left: 8px; gap: 4px; }
.tab span { margin-right: 2px; }
.tab .x { margin-left: 4px; }
.canvas { flex: 1; min-height: 0; position: relative; overflow: hidden; border-left: 1px solid #7d8a90; background: linear-gradient(#b5b6b8, #eaebed); }
.model { position: absolute; left: -1px; top: 0; }
.lbl { font-family: "Liberation Sans", sans-serif; }
.lbl-a { font-size: 13px; fill: #7a5c60; }
.lbl-b { font-size: 11px; }
.lz { fill: #14379a; } .lx { fill: #c9544e; } .ly { fill: #3f9a4a; }

.logo { position: absolute; left: 607px; top: 689px; display: flex; gap: 9px; align-items: flex-start; }
.logo-text { display: flex; flex-direction: column; padding-top: 9px; color: #f2f3f4; }
.logo-text strong { font: 700 42px/44px "Liberation Sans", "Noto Sans CJK SC", sans-serif; white-space: nowrap; }
.logo-text span { font: 12.500px/13px "Liberation Sans", sans-serif; letter-spacing: 4.700px; margin-top: 3px; white-space: nowrap; }

/* dialog */
.dialog { position: absolute; left: 291px; top: 179px; width: 328px; height: 274px; background: #eee; border: 1px solid #d2d2d2; border-top: 0; box-shadow: 0 1px 3px rgba(0,0,0,.15); display: flex; flex-direction: column; z-index: 5; }
.dlg-head { height: 24px; flex: none; background: #5a9fb9; display: flex; align-items: center; padding: 0 9px 0 7px; color: #fff; font-size: 14px; gap: 6px; margin: 0 -1px; }
.dlg-title { flex: 1; margin-left: 0; }
.dlg-body { flex: 1; display: flex; flex-direction: column; gap: 4px; padding: 4px 5px 0 5px; }
.sec { background: #fff; border-bottom: 1px solid #ccc; height: 70px; flex: none; padding: 0 9px 0 7px; }
.sec.closed { height: 23px; }
.sec-head { height: 30px; display: flex; justify-content: space-between; color: #27708a; font-size: 14px; line-height: 26px; align-items: flex-start; margin-right: -4px; }
.closed .sec-head { height: 22px; line-height: 26px; overflow: hidden; }
.chev { margin-top: 9px; }
.closed .chev { margin-top: 7px; }
.pick { display: flex; gap: 2px; height: 32px; padding-left: 2px; }
.pick-main { flex: 1; display: flex; align-items: center; gap: 4px; padding-left: 2px; }
.pick-main.on { background: #fedc76; }
.pick-btn { width: 32px; flex: none; border: 1px solid #b9b9b9; display: flex; align-items: center; justify-content: center; }
.pick-btn.on { background: #fedc76; border: 0; }
.focus { width: 26px; height: 26px; outline: 1px dotted #222; display: block; }
.dlg-foot { display: flex; justify-content: flex-end; gap: 5px; padding: 8px 10px 0 0; }
.btn { width: 54px; height: 25px; padding: 0; background: #e1e1e1; border: 1px solid #adadad; color: #333; font: 12px/16px "Noto Sans", "Noto Sans CJK SC", sans-serif; }
.btn.ok { background: #6aaec6; border-color: #6aaec6; color: #e4f1f6; word-spacing: 3px; }
```
